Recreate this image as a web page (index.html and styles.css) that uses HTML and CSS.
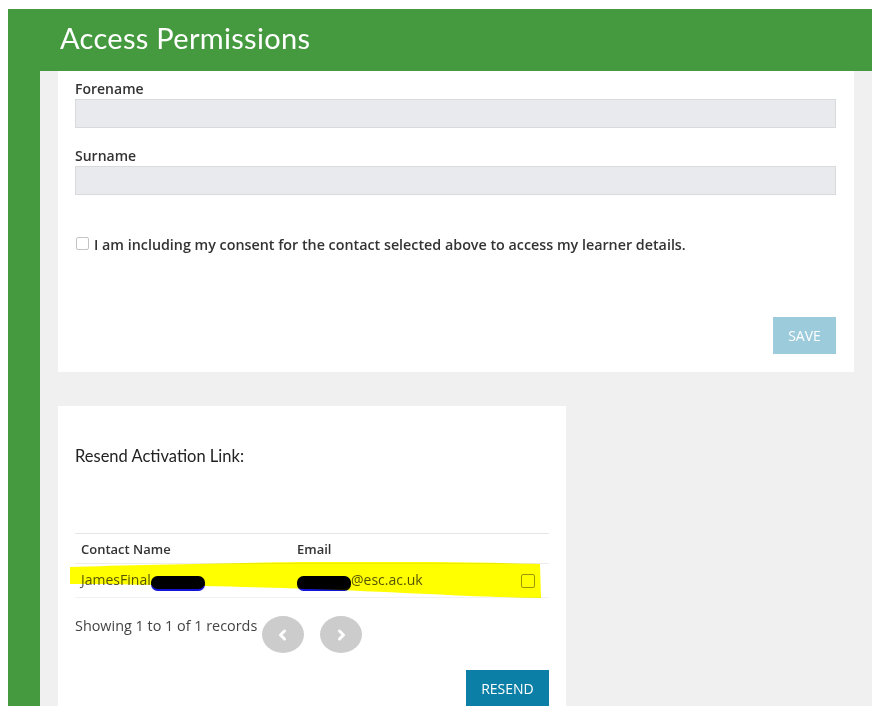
FILE: index.html
```html
<!DOCTYPE html>
<html lang="en">
<head>
<meta charset="utf-8">
<title>Access Permissions</title>
<link rel="stylesheet" href="styles.css">
</head>
<body>
<div class="app">
  <header class="topbar">
    <h1 class="page-title">Access Permissions</h1>
  </header>
  <main class="content">
    <section class="card form-card">
      <div class="field">
        <label class="field-label">Forename</label>
        <div class="field-input"></div>
      </div>
      <div class="field">
        <label class="field-label">Surname</label>
        <div class="field-input"></div>
      </div>
      <label class="consent">
        <span class="checkbox"></span>
        <span>I am including my consent for the contact selected above to access my learner details.</span>
      </label>
      <div class="actions">
        <button class="btn btn-save">SAVE</button>
      </div>
    </section>

    <section class="card resend-card">
      <h2 class="card-title">Resend Activation Link:</h2>
      <div class="table-wrap">
        <table class="contacts">
          <thead>
            <tr>
              <th class="col-name">Contact Name</th>
              <th class="col-email">Email</th>
              <th class="col-check"></th>
            </tr>
          </thead>
          <tbody>
            <tr>
              <td class="col-name">JamesFinal<span class="redact redact-name"></span></td>
              <td class="col-email"><span class="redact redact-email"></span>@esc.ac.uk</td>
              <td class="col-check"><span class="checkbox checkbox-row"></span></td>
            </tr>
          </tbody>
        </table>
        <!-- highlighter stroke across the selected row -->
        <svg class="marker" width="480" height="40" viewBox="0 0 480 40">
          <path d="M0 5 C 60 3, 160 1, 230 0 C 300 -1, 400 0, 470 2 L 471 36 C 400 35, 330 30, 240 27 C 150 24, 60 22, 0 22 Z" fill="#ffff00"/>
        </svg>
      </div>
      <div class="pager">
        <span class="pager-info">Showing 1 to 1 of 1 records</span>
        <button class="pager-btn" aria-label="Previous">
          <svg width="14" height="14" viewBox="0 0 14 14"><path d="M8.5 3 L4.5 7 L8.5 11" fill="none" stroke="#fff" stroke-width="3" stroke-linecap="round" stroke-linejoin="round"/></svg>
        </button>
        <button class="pager-btn" aria-label="Next">
          <svg width="14" height="14" viewBox="0 0 14 14"><path d="M5.5 3 L9.5 7 L5.5 11" fill="none" stroke="#fff" stroke-width="3" stroke-linecap="round" stroke-linejoin="round"/></svg>
        </button>
      </div>
      <div class="actions">
        <button class="btn btn-resend">RESEND</button>
      </div>
    </section>
  </main>
</div>
</body>
</html>
```

FILE: styles.css
```css
html, body {
  height: 100%;
}

body {
  margin: 9px 0 0 8px;
  background: #ffffff;
  font-family: "Open Sans", "Liberation Sans", sans-serif;
  color: #333333;
  overflow: hidden;
}

.app {
  background: #459a3f;
  min-height: 100%;
}

.topbar {
  height: 62px;
  display: flex;
  align-items: center;
  padding-left: 52px;
  padding-bottom: 6px;
  box-sizing: border-box;
}

.page-title {
  margin: 0;
  color: #ffffff;
  font-family: Lato, "Open Sans", sans-serif;
  font-weight: 400;
  font-size: 29px;
  letter-spacing: 0.3px;
}

.content {
  margin-left: 32px;
  background: #f0f0f0;
  padding: 0 18px 0 18px;
  min-height: 700px;
}

.card {
  background: #ffffff;
}

/* ---- details form ---- */
.form-card {
  padding: 8px 18px 18px 17px;
}

.field {
  display: flex;
  flex-direction: column;
  margin-bottom: 18px;
}

.field-label {
  font-size: 14px;
  font-weight: 600;
  line-height: 20px;
  color: #333333;
}

.field-input {
  height: 27px;
  background: #e8eaed;
  border: 1px solid #d8dadc;
}

.consent {
  display: flex;
  align-items: center;
  gap: 5px;
  margin-top: 40px;
  font-size: 14.3px;
  font-weight: 600;
  line-height: 20px;
  color: #333333;
}

.checkbox {
  width: 11px;
  height: 11px;
  border: 1px solid #c4c4c4;
  border-radius: 2px;
  background: #ffffff;
  flex: none;
  margin-left: 1px;
  margin-top: -3px;
}

.actions {
  display: flex;
  justify-content: flex-end;
}

.form-card .actions {
  margin-top: 62px;
}

.btn {
  border: none;
  color: #ffffff;
  font-family: "Open Sans", sans-serif;
  font-size: 14px;
  height: 37px;
  padding: 0;
  cursor: pointer;
}

.btn-save {
  width: 63px;
  background: #9ccbdb;
}

.btn-resend {
  width: 83px;
  background: #0c7fa6;
}

/* ---- resend card ---- */
.resend-card {
  width: 474px;
  margin-top: 34px;
  padding: 39px 17px 0 17px;
}

.card-title {
  margin: 0;
  font-family: Lato, "Open Sans", sans-serif;
  font-weight: 400;
  font-size: 16.5px;
  line-height: 22px;
  color: #222222;
}

.table-wrap {
  position: relative;
  margin-top: 66px;
}

.contacts {
  width: 100%;
  border-collapse: collapse;
  font-size: 13px;
}

.contacts th {
  text-align: left;
  font-weight: 600;
  height: 29px;
  padding: 0 6px;
  border-top: 1px solid #e4e4e4;
  border-bottom: 1px solid #ececec;
  color: #333333;
}

.contacts td {
  height: 30px;
  padding: 0 6px 3px 6px;
  color: #555555;
  border-bottom: 1px solid #f2f2f2;
  font-size: 14px;
}

.col-name {
  width: 204px;
}

.col-check {
  width: 18px;
  text-align: right;
  padding-right: 14px !important;
}

.checkbox-row {
  display: inline-block;
  width: 12px;
  height: 12px;
  vertical-align: middle;
  border-color: #9a9a9a;
  margin-top: 0;
}

.redact {
  display: inline-block;
  height: 13px;
  background: #000000;
  border-radius: 7px;
  vertical-align: -4px;
  box-shadow: 0 2px 0 #1515d8;
}

.redact-name {
  width: 54px;
}

.redact-email {
  width: 54px;
}

.marker {
  position: absolute;
  left: -5px;
  top: 29px;
  mix-blend-mode: multiply;
  pointer-events: none;
}

/* ---- paging ---- */
.pager {
  display: flex;
  align-items: flex-start;
  margin-top: 18px;
}

.pager-info {
  font-size: 14.4px;
  line-height: 20px;
  color: #444444;
  margin-right: 5px;
}

.pager-btn {
  width: 42px;
  height: 37px;
  border-radius: 50%;
  border: none;
  background: #cccccc;
  display: flex;
  align-items: center;
  justify-content: center;
  padding: 0;
  margin-right: 16px;
}

.resend-card .actions {
  margin-top: 17px;
}
```
